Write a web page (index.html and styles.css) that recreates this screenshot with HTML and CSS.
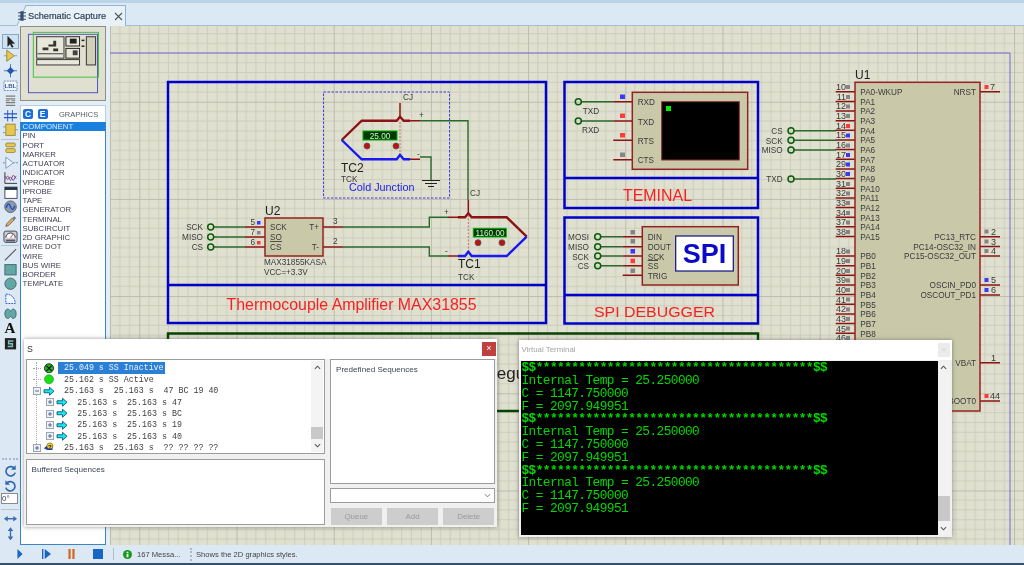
FILE: index.html
```html
<!DOCTYPE html>
<html lang="en">
<head>
<meta charset="utf-8">
<title>Schematic Capture</title>
<link rel="stylesheet" href="styles.css">
</head>
<body>
<svg class="defs" width="0" height="0">
  <symbol id="plus" viewBox="0 0 8 8"><rect x=".5" y=".5" width="7" height="7" fill="#eef2f6" stroke="#9aa6b2"/><path d="M2 4h4M4 2v4" stroke="#5a6a90"/></symbol>
  <symbol id="minus" viewBox="0 0 8 8"><rect x=".5" y=".5" width="7" height="7" fill="#eef2f6" stroke="#9aa6b2"/><path d="M2 4h4" stroke="#5a6a90"/></symbol>
  <symbol id="arrow" viewBox="0 0 12 10"><path d="M1 3.5h5.5V1L11 5 6.500 9V6.500H1z" fill="#19e6f0" stroke="#0a5a78" stroke-width=".9"/></symbol>
</svg>
<div class="app">
  <header class="tabs">
    <div class="tab">
      <svg class="tab-ico" viewBox="0 0 10 14"><path d="M3 1h4v12H3z" fill="#3a5068"/><path d="M0 3h10M0 7h10M0 11h10" stroke="#3a5068" stroke-width="1.400"/></svg>
      <span class="tab-text">Schematic Capture</span>
      <svg class="tab-x" viewBox="0 0 9 9"><path d="M1 1l7 7M8 1L1 8" stroke="#4c565f" stroke-width="1.100"/></svg>
    </div>
  </header>
  <main class="main">
    <nav class="tools">
      <div class="tool sel"><svg viewBox="0 0 16 14"><path d="M5 1v11l2.500-2.500L9.500 13l1.500-.8-2-3.400h3.500z" fill="#222" stroke="#222" stroke-width=".4"/></svg></div>
      <div class="tool"><svg viewBox="0 0 16 14"><path d="M1 7h3M12 7h3" stroke="#8a98b0"/><path d="M4 1l8 6-8 6z" fill="#e6c84e" stroke="#9c8a40"/></svg></div>
      <div class="tool"><svg viewBox="0 0 16 14"><path d="M1 7h14M8 0v14" stroke="#4c6ea8"/><path d="M8 3l4 4-4 4-4-4z" fill="#2456b0"/></svg></div>
      <div class="tool"><svg viewBox="0 0 16 14"><rect x="1" y="2" width="14" height="10" fill="#f2f6fa" stroke="#6a88b0" stroke-dasharray="2 1"/><text class="lbl" x="8" y="9.500">LBL</text></svg></div>
      <div class="tool"><svg viewBox="0 0 16 14"><path d="M3 2h10M3 5h10M3 7h4M9 7h4M3 9h10M3 12h10" stroke="#7d7d74" stroke-width="1.300"/></svg></div>
      <div class="tool"><svg viewBox="0 0 16 14"><path d="M1 5h14M1 9h14" stroke="#2456c0" stroke-width="1.500"/><path d="M5 1v12M10 1v12" stroke="#2456c0"/></svg></div>
      <div class="tool"><svg viewBox="0 0 16 14"><path d="M0 4h3M0 10h3M13 7h3" stroke="#8a98b0"/><rect x="3" y="1" width="10" height="12" fill="#e6c84e" stroke="#9c8a40"/></svg></div>
      <div class="tool-sep"></div>
      <div class="tool"><svg viewBox="0 0 16 14"><rect x="3" y="2" width="10" height="4" rx="1" fill="#e6c84e" stroke="#9c8a40"/><rect x="3" y="8" width="10" height="4" rx="1" fill="#e6c84e" stroke="#9c8a40"/></svg></div>
      <div class="tool"><svg viewBox="0 0 16 14"><path d="M0 7h3M11 7h5" stroke="#6a88b0" stroke-dasharray="2 1"/><path d="M3 1l8 6-8 6z" fill="#eef4fa" stroke="#7a9ab8"/></svg></div>
      <div class="tool"><svg viewBox="0 0 16 14"><path d="M2 1v12h13" stroke="#333" fill="none"/><path d="M2 9l3-4 3 5 3-6 3 4" stroke="#e04040" fill="none"/><path d="M2 5l3 4 3-3 3 4 3-5" stroke="#3060d0" fill="none"/></svg></div>
      <div class="tool"><svg viewBox="0 0 16 14"><rect x="2" y="1" width="13" height="12" fill="#fff" stroke="#445"/><rect x="2" y="1" width="13" height="3" fill="#234"/></svg></div>
      <div class="tool"><svg viewBox="0 0 16 14"><circle cx="8" cy="7" r="6.200" fill="#8f9aa8" stroke="#58626e"/><path d="M3.500 8c1.500-5 3-5 4.500-1s3 4 4.500-1" fill="none" stroke="#1a50c8" stroke-width="1.600"/></svg></div>
      <div class="tool"><svg viewBox="0 0 16 14"><path d="M3 12l1-3 6-6 2 2-6 6z" fill="#d8b070" stroke="#7a6040"/><path d="M10 3l2-2 2 2-2 2" fill="#777"/></svg></div>
      <div class="tool"><svg viewBox="0 0 16 14"><rect x="1" y="1" width="14" height="12" rx="2" fill="#c8d0d8" stroke="#445"/><path d="M3 8a5 5 0 0 1 10 0" fill="#fff" stroke="#333"/><path d="M8 8l3-4" stroke="#e03030"/><rect x="3" y="10" width="10" height="2" fill="#556"/></svg></div>
      <div class="tool-sep"></div>
      <div class="tool"><svg viewBox="0 0 16 14"><path d="M2 13L14 1" stroke="#555" stroke-width="1.200"/></svg></div>
      <div class="tool"><svg viewBox="0 0 16 14"><rect x="2" y="1.500" width="12" height="11" fill="#62a6a6" stroke="#3f6a6a"/></svg></div>
      <div class="tool"><svg viewBox="0 0 16 14"><circle cx="8" cy="7" r="6" fill="#62a6a6" stroke="#3f6a6a"/></svg></div>
      <div class="tool"><svg viewBox="0 0 16 14"><path d="M3 2c6 0 10 4 10 10H3z" fill="#eef4fa" stroke="#2050c8" stroke-dasharray="2 1"/></svg></div>
      <div class="tool"><svg viewBox="0 0 16 14"><path d="M5 2c2 0 2 2 3 2s1-2 3-2c4 0 4 10 0 10-2 0-2-2-3-2s-1 2-3 2C1 12 1 2 5 2z" fill="#62a6a6" stroke="#3f6a6a"/></svg></div>
      <div class="tool tool-a">A</div>
      <div class="tool"><svg viewBox="0 0 16 14"><rect x="2" y="1" width="12" height="12" fill="#222"/><path d="M11 4H6v3h4v3H5" fill="none" stroke="#7fc0c0" stroke-width="1.500"/></svg></div>
      <div class="tool-fill"></div>
      <div class="tool-grip"></div>
      <div class="tool"><svg viewBox="0 0 16 14"><path d="M12.500 5A5 5 0 1 0 13 9" fill="none" stroke="#2f66b0" stroke-width="1.800"/><path d="M13.500 1v5h-5z" fill="#2f66b0"/></svg></div>
      <div class="tool"><svg viewBox="0 0 16 14"><path d="M3.500 5A5 5 0 1 1 3 9" fill="none" stroke="#2f66b0" stroke-width="1.800"/><path d="M2.500 1v5h5z" fill="#2f66b0"/></svg></div>
      <div class="angle">0°</div>
      <div class="tool-sep"></div>
      <div class="tool"><svg viewBox="0 0 16 14"><path d="M4 7h8" stroke="#3a6cb0" stroke-width="1.500"/><path d="M5 4L1 7l4 3zM11 4l4 3-4 3z" fill="#3a6cb0"/></svg></div>
      <div class="tool"><svg viewBox="0 0 16 14"><path d="M8 3v8" stroke="#3a6cb0" stroke-width="1.500"/><path d="M5 4l3-4 3 4zM5 10l3 4 3-4z" fill="#3a6cb0"/></svg></div>
    </nav>
    <aside class="side">
      <div class="overview">
        <svg viewBox="0 0 86 75">
          <rect x="7.500" y="7.500" width="71" height="60" fill="none" stroke="#5050c0"/>
          <rect x="16" y="10" width="28" height="22" fill="#e8e8da" stroke="#333"/>
          <rect x="16" y="33.500" width="44" height="5.500" fill="#e8e8da" stroke="#333"/>
          <path d="M17 27.500h26" stroke="#333"/>
          <path d="M22 21h6v3h-6zM28 18h6v2h-6zM33 14h3v6h-3zM33 22h5v3h-5z" fill="#333"/>
          <rect x="46" y="10" width="14" height="9.500" fill="#e8e8da" stroke="#222"/>
          <rect x="50" y="12" width="7" height="5" fill="#222"/>
          <rect x="46" y="22" width="14" height="10" fill="#e8e8da" stroke="#222"/>
          <rect x="53" y="24" width="5" height="5" fill="#444"/>
          <rect x="67" y="10" width="9.500" height="29" fill="#d0d0b8" stroke="#333"/>
          <rect x="62" y="13" width="3" height="1.500" fill="#222"/><rect x="62" y="19" width="3" height="1.500" fill="#222"/>
          <rect x="12.500" y="5.500" width="67" height="46" fill="none" stroke="#40c040"/>
        </svg>
      </div>
      <div class="mode">
        <span class="mode-btn">C</span><span class="mode-btn">E</span><span class="mode-title">GRAPHICS</span>
      </div>
      <ul class="list">
        <li class="cur">COMPONENT</li><li>PIN</li><li>PORT</li><li>MARKER</li><li>ACTUATOR</li><li>INDICATOR</li><li>VPROBE</li><li>IPROBE</li><li>TAPE</li><li>GENERATOR</li><li>TERMINAL</li><li>SUBCIRCUIT</li><li>2D GRAPHIC</li><li>WIRE DOT</li><li>WIRE</li><li>BUS WIRE</li><li>BORDER</li><li>TEMPLATE</li>
      </ul>
    </aside>
    <section class="canvas">
      <svg class="sheet" viewBox="110 26 914 519" width="914" height="519">
        <defs>
          <pattern id="grid" patternUnits="userSpaceOnUse" x="139.300" y="101.700" width="97.200" height="97.200">
            <path class="gminor" d="M9.720 0V97.200M19.440 0V97.200M29.160 0V97.200M38.880 0V97.200M48.600 0V97.200M58.320 0V97.200M68.040 0V97.200M77.760 0V97.200M87.480 0V97.200M0 9.720H97.200M0 19.440H97.200M0 29.160H97.200M0 38.880H97.200M0 48.600H97.200M0 58.320H97.200M0 68.040H97.200M0 77.760H97.200M0 87.480H97.200"/>
            <path class="gmajor" d="M.5 0V97.200M0 .5H97.200"/>
          </pattern>
        </defs>
        <rect x="110" y="26" width="914" height="519" fill="url(#grid)"/>
        <path class="edge" d="M110 53H1010V545"/>

        <!-- frames -->
        <rect class="frame" x="168" y="82" width="378" height="241"/><path class="frame" d="M168 285H546"/>
        <rect class="frame" x="564.500" y="82" width="193.500" height="126"/><path class="frame" d="M564.500 178H758"/>
        <rect class="frame" x="564.500" y="217.500" width="193.500" height="106"/><path class="frame" d="M564.500 295H758"/>
        <rect class="frame-g" x="168" y="333.500" width="590" height="77.500"/>
        <text class="cap big" x="484.500" y="379">Regulator</text>

        <text class="cap red" x="226.500" y="310" textLength="250" lengthAdjust="spacingAndGlyphs">Thermocouple Amplifier MAX31855</text>
        <text class="cap red" x="623" y="201" textLength="69" lengthAdjust="spacingAndGlyphs">TEMINAL</text>
        <text class="cap red2" x="594" y="317" textLength="121" lengthAdjust="spacingAndGlyphs">SPI DEBUGGER</text>

        <!-- cold junction group -->
        <rect class="dash" x="323.500" y="92" width="126" height="106"/>
        <path class="tc-r" d="M341.700 140L361.700 120.700H396.700L400 116.700L403.700 120.700H410"/>
        <path class="tc-b" d="M341.700 140L361.700 159.300H396.700L400 155L403.700 159.300H410"/>
        <path class="pin" d="M400 103V116.700M410 120.700H420M410 159.300H420"/>
        <path class="pink" d="M400 122V154"/>
        <path class="wire" d="M420 120.700H468V200M420 157H431V180"/>
        <path class="gnd" d="M422 180.500H440M425 183.500H437M428 186.500H434"/>
        <text class="t8" x="403" y="100">CJ</text>
        <text class="t8" x="419" y="118">+</text>
        <text class="t8" x="417" y="157">-</text>
        <rect class="lcd" x="363" y="131" width="34" height="9"/>
        <text class="lcd-t" x="380" y="139">25.00</text>
        <circle class="dot" cx="367" cy="146" r="3"/><circle class="dot" cx="396" cy="146" r="3"/>
        <text class="ref" x="341" y="172">TC2</text>
        <text class="t8" x="341" y="181.500">TCK</text>
        <text class="cold" x="349" y="191">Cold Junction</text>

        <!-- U2 -->
        <path class="wire" d="M213.700 227H245M213.700 237H245M213.700 247H245"/>
        <path class="pin" d="M245 227H265M245 237H265M245 247H265M323 227H343M323 247H343"/>
        <rect class="body" x="265" y="218" width="58" height="38"/>
        <g class="term"><circle cx="210.700" cy="227" r="3"/><circle cx="210.700" cy="237" r="3"/><circle cx="210.700" cy="247" r="3"/></g>
        <text class="t8 e" x="203" y="230">SCK</text><text class="t8 e" x="203" y="240">MISO</text><text class="t8 e" x="203" y="250">CS</text>
        <text class="ref" x="265" y="215">U2</text>
        <text class="t8" x="250.500" y="225">5</text><text class="t8" x="250.500" y="235">7</text><text class="t8" x="250.500" y="245">6</text>
        <rect class="sb" x="257" y="221" width="3.500" height="3.500"/><rect class="sg" x="257" y="231" width="3.500" height="3.500"/><rect class="sr" x="257" y="241" width="3.500" height="3.500"/>
        <text class="t8" x="270" y="230">SCK</text><text class="t8" x="270" y="240">SO</text><text class="t8" x="270" y="250">CS</text>
        <path class="over" d="M270 241.500H282"/>
        <text class="t8 e" x="319" y="230">T+</text><text class="t8 e" x="319" y="250">T-</text>
        <text class="t8" x="333" y="224">3</text><text class="t8" x="333" y="244">2</text>
        <text class="t8" x="264" y="265">MAX31855KASA</text><text class="t8" x="264" y="275">VCC=+3.3V</text>
        <path class="wire" d="M343 227H429.300V217.300H448M343 247H429.300V256H448"/>

        <!-- TC1 -->
        <path class="pin" d="M448 217.300H458M448 256H458M468.300 200V213"/>
        <path class="tc-r" d="M458 217.300H465L468.300 213.300L471.700 217.300H506.700L526.700 236.700"/>
        <path class="tc-b" d="M458 256H465L468.300 251.700L471.700 256H506.700L526.700 236.700"/>
        <path class="pink" d="M468.300 215V250"/>
        <text class="t8" x="444" y="215">+</text><text class="t8" x="445" y="254">-</text>
        <text class="t8" x="470" y="196">CJ</text>
        <rect class="lcd" x="473.300" y="228.300" width="33" height="8.700"/>
        <text class="lcd-t" x="490" y="236">1160.00</text>
        <circle class="dot" cx="478" cy="242.700" r="3"/><circle class="dot" cx="502" cy="242.700" r="3"/>
        <text class="ref" x="458" y="268">TC1</text>
        <text class="t8" x="458" y="280">TCK</text>

        <!-- Terminal -->
        <path class="wire" d="M581 101.700H613.300M581 121H613.300"/>
        <g class="term"><circle cx="578.300" cy="101.700" r="3"/><circle cx="578.300" cy="121" r="3"/></g>
        <path class="pin" d="M613.300 101.700H632.300M613.300 121H632.300M613.300 140.300H632.300M613.300 159.700H632.300"/>
        <rect class="body" x="632.300" y="92.300" width="115.400" height="77"/>
        <rect class="scr" x="661.700" y="101.700" width="77.600" height="58.300"/>
        <rect class="led" x="666" y="106" width="5" height="5"/>
        <rect class="sb" x="620" y="94.500" width="5" height="4.500"/><rect class="sr" x="620" y="113.500" width="5" height="4.500"/><rect class="sr" x="620" y="133" width="5" height="4.500"/><rect class="sg" x="620" y="152.500" width="5" height="4.500"/>
        <text class="t8" x="582.700" y="114">TXD</text><text class="t8" x="582" y="133">RXD</text>
        <text class="t8" x="637.700" y="105">RXD</text><text class="t8" x="637.700" y="124.500">TXD</text><text class="t8" x="637.700" y="143.500">RTS</text><text class="t8" x="637.700" y="163">CTS</text>

        <!-- SPI -->
        <path class="wire" d="M600.500 236.700H622.700M600.500 246.700H622.700M600.500 256H622.700M600.500 265.700H622.700"/>
        <g class="term"><circle cx="597.700" cy="236.700" r="3"/><circle cx="597.700" cy="246.700" r="3"/><circle cx="597.700" cy="256" r="3"/><circle cx="597.700" cy="265.700" r="3"/></g>
        <path class="pin" d="M622.700 236.700H642.300M622.700 246.700H642.300M622.700 256H642.300M622.700 265.700H642.300M622.700 275.300H642.300"/>
        <rect class="body" x="642.300" y="226.700" width="96" height="58.300"/>
        <rect class="spi-box" x="675.700" y="236" width="57.600" height="35"/>
        <text class="spi" x="704.500" y="263">SPI</text>
        <rect class="sg" x="630.500" y="230" width="4.500" height="4.500"/><rect class="sg" x="630.500" y="239" width="4.500" height="4.500"/><rect class="sb" x="630.500" y="249" width="4.500" height="4.500"/><rect class="sr" x="630.500" y="258.700" width="4.500" height="4.500"/><rect class="sg" x="630.500" y="268.500" width="4.500" height="4.500"/>
        <text class="t8 e" x="589" y="240">MOSI</text><text class="t8 e" x="589" y="250">MISO</text><text class="t8 e" x="589" y="259.500">SCK</text><text class="t8 e" x="589" y="269">CS</text>
        <text class="t8" x="647.700" y="240">DIN</text><text class="t8" x="647.700" y="250">DOUT</text><text class="t8" x="647.700" y="259.500">SCK</text><text class="t8" x="647.700" y="269">SS</text><text class="t8" x="647.700" y="279">TRIG</text>
        <path class="over" d="M647.700 260.500H658"/>

        <!-- connectors to U1 -->
        <path class="wire" d="M794 130.700H836M794 140.300H836M794 150H836M794 179H836"/>
        <g class="term"><circle cx="791" cy="130.700" r="3"/><circle cx="791" cy="140.300" r="3"/><circle cx="791" cy="150" r="3"/><circle cx="791" cy="179" r="3"/></g>
        <text class="t8 e" x="782.700" y="134">CS</text><text class="t8 e" x="782.700" y="143.500">SCK</text><text class="t8 e" x="782.700" y="153">MISO</text><text class="t8 e" x="782.700" y="182">TXD</text>

        <!-- U1 -->
        <path class="pin" d="M835.700 91.700H855M835.700 101.400H855M835.700 111H855M835.700 120.700H855M835.700 130.300H855M835.700 140H855M835.700 149.600H855M835.700 159.300H855M835.700 168.900H855M835.700 178.600H855M835.700 188.200H855M835.700 197.900H855M835.700 207.500H855M835.700 217.200H855M835.700 226.800H855M835.700 236.500H855M835.700 256H855M835.700 265.700H855M835.700 275.300H855M835.700 285H855M835.700 294.600H855M835.700 304.300H855M835.700 313.900H855M835.700 323.600H855M835.700 333.200H855M835.700 342.900H855M980 91.700H1000M980 236.700H1000M980 246.400H1000M980 256H1000M980 285H1000M980 295H1000M980 362.700H1000M980 401H1000"/>
        <rect class="body" x="855" y="82.300" width="125" height="328.700"/>
        <text class="ref" x="855" y="79">U1</text>
        <path class="sg" d="M846 85h4v4h-4zM846 95h4v4h-4zM846 104.500h4v4h-4zM846 114h4v4h-4zM846 143.500h4v4h-4zM846 182h4v4h-4zM846 191.500h4v4h-4zM846 201h4v4h-4zM846 211h4v4h-4zM846 220.500h4v4h-4zM846 230h4v4h-4zM846 249.500h4v4h-4zM846 259h4v4h-4zM846 269h4v4h-4zM846 278.500h4v4h-4zM846 288h4v4h-4zM846 297.500h4v4h-4zM846 307.500h4v4h-4zM846 317h4v4h-4zM846 326.500h4v4h-4zM846 336h4v4h-4zM984.500 229.500h4v4h-4zM984.500 239.500h4v4h-4zM984.500 249h4v4h-4z"/>
        <path class="sr" d="M846 124h4v4h-4zM984.500 85h4v4h-4zM984.500 394h4v4h-4z"/>
        <path class="sb" d="M846 133.500h4v4h-4zM846 153h4v4h-4zM846 162.500h4v4h-4zM846 172h4v4h-4zM984.500 278h4v4h-4zM984.500 288h4v4h-4z"/>
        <g class="n9 e">
          <text x="846" y="90">10</text><text x="846" y="99.700">11</text><text x="846" y="109.300">12</text><text x="846" y="119">13</text><text x="846" y="128.600">14</text><text x="846" y="138.300">15</text><text x="846" y="147.900">16</text><text x="846" y="157.600">17</text><text x="846" y="167.200">29</text><text x="846" y="176.900">30</text><text x="846" y="186.500">31</text><text x="846" y="196.200">32</text><text x="846" y="205.800">33</text><text x="846" y="215.500">34</text><text x="846" y="225.100">37</text><text x="846" y="234.800">38</text>
          <text x="846" y="254.300">18</text><text x="846" y="264">19</text><text x="846" y="273.600">20</text><text x="846" y="283.300">39</text><text x="846" y="292.900">40</text><text x="846" y="302.600">41</text><text x="846" y="312.200">42</text><text x="846" y="321.900">43</text><text x="846" y="331.500">45</text><text x="846" y="341.200">46</text>
        </g>
        <g class="n9">
          <text x="990" y="90">7</text><text x="991" y="235">2</text><text x="991" y="244.700">3</text><text x="991" y="254.300">4</text><text x="991" y="283.300">5</text><text x="991" y="293.300">6</text><text x="991" y="361">1</text><text x="990" y="399.300">44</text>
        </g>
        <g class="t8">
          <text x="860.300" y="95">PA0-WKUP</text><text x="860.300" y="104.700">PA1</text><text x="860.300" y="114.300">PA2</text><text x="860.300" y="124">PA3</text><text x="860.300" y="133.600">PA4</text><text x="860.300" y="143.300">PA5</text><text x="860.300" y="152.900">PA6</text><text x="860.300" y="162.600">PA7</text><text x="860.300" y="172.200">PA8</text><text x="860.300" y="181.900">PA9</text><text x="860.300" y="191.500">PA10</text><text x="860.300" y="201.200">PA11</text><text x="860.300" y="210.800">PA12</text><text x="860.300" y="220.500">PA13</text><text x="860.300" y="230.100">PA14</text><text x="860.300" y="239.800">PA15</text>
          <text x="860.300" y="259.300">PB0</text><text x="860.300" y="269">PB1</text><text x="860.300" y="278.600">PB2</text><text x="860.300" y="288.300">PB3</text><text x="860.300" y="297.900">PB4</text><text x="860.300" y="307.600">PB5</text><text x="860.300" y="317.200">PB6</text><text x="860.300" y="326.900">PB7</text><text x="860.300" y="336.500">PB8</text>
        </g>
        <g class="t8 e">
          <text x="976" y="95">NRST</text><text x="976" y="240">PC13_RTC</text><text x="976" y="250">PC14-OSC32_IN</text><text x="976" y="259">PC15-OSC32_OUT</text><text x="976" y="288">OSCIN_PD0</text><text x="976" y="298">OSCOUT_PD1</text><text x="976" y="366">VBAT</text><text x="976" y="404">BOOT0</text>
        </g>
      </svg>
    </section>
  </main>
  <footer class="status">
    <svg class="st-ico play" viewBox="0 0 7 12" preserveAspectRatio="none"><path d="M.5 0l6 6-6 6z" fill="#1766c2"/></svg>
    <svg class="st-ico step" viewBox="0 0 10 12" preserveAspectRatio="none"><path d="M0 0h1.500v12H0z" fill="#1766c2"/><path d="M3 0l7 6-7 6z" fill="#1766c2"/></svg>
    <svg class="st-ico pause" viewBox="0 0 8 12" preserveAspectRatio="none"><path d="M.5 0h2.500v12H.5zM5 0h2.500v12H5z" fill="#d8641e"/></svg>
    <svg class="st-ico stop" viewBox="0 0 10 10"><rect width="10" height="10" fill="#1766c2"/></svg>
    <span class="st-sep"></span>
    <svg class="st-info" viewBox="0 0 10 10"><circle cx="5" cy="5" r="5" fill="#159a1e"/><path d="M4 2h2v1.500H4zM4 4.500h2V8H4z" fill="#fff"/></svg>
    <span class="st-msg">167 Messa...</span>
    <span class="st-grip"></span>
    <span class="st-hint">Shows the 2D graphics styles.</span>
  </footer>

  <section class="win debug">
    <div class="win-title"><span>S</span><span class="close-red">×</span></div>
    <div class="debug-body">
      <div class="debug-left">
        <div class="tree">
          <div class="tree-rows">
            <div class="row"><i class="slot stub"></i><svg class="ic" viewBox="0 0 12 12"><circle cx="6" cy="6" r="5.200" fill="#18c018" stroke="#222"/><path d="M3 3l6 6M9 3l-6 6" stroke="#111" stroke-width="1.600"/></svg><span class="sel-row">25.049 s SS Inactive</span></div>
            <div class="row"><i class="slot stub"></i><svg class="ic" viewBox="0 0 12 12"><circle cx="6" cy="6" r="5.200" fill="#18e018" stroke="#1a8a1a" stroke-width=".6"/></svg><span class="val">25.162 s SS Active</span></div>
            <div class="row"><svg class="slot"><use href="#minus"/></svg><svg class="ic"><use href="#arrow"/></svg><span class="val">25.163 s  25.163 s  47 BC 19 40</span></div>
            <div class="row sub"><svg class="slot"><use href="#plus"/></svg><svg class="ic"><use href="#arrow"/></svg><span class="val">25.163 s  25.163 s 47</span></div>
            <div class="row sub"><svg class="slot"><use href="#plus"/></svg><svg class="ic"><use href="#arrow"/></svg><span class="val">25.163 s  25.163 s BC</span></div>
            <div class="row sub"><svg class="slot"><use href="#plus"/></svg><svg class="ic"><use href="#arrow"/></svg><span class="val">25.163 s  25.163 s 19</span></div>
            <div class="row sub"><svg class="slot"><use href="#plus"/></svg><svg class="ic"><use href="#arrow"/></svg><span class="val">25.163 s  25.163 s 40</span></div>
            <div class="row"><svg class="slot"><use href="#plus"/></svg><svg class="ic" viewBox="0 0 12 12"><path d="M0 7l4-3h6v5H4z" fill="#1a3cc0"/><circle cx="7" cy="4.500" r="3.500" fill="#f0d020" stroke="#222" stroke-width=".5"/><text class="q" x="7" y="7.500">?</text></svg><span class="val">25.163 s  25.163 s  ?? ?? ?? ??</span></div>
          </div>
          <div class="vscroll">
            <svg class="chev" viewBox="0 0 8 5"><path d="M1 4l3-3 3 3" fill="none" stroke="#555" stroke-width="1.200"/></svg>
            <div class="track"><div class="thumb tree-thumb"></div></div>
            <svg class="chev" viewBox="0 0 8 5"><path d="M1 1l3 3 3-3" fill="none" stroke="#555" stroke-width="1.200"/></svg>
          </div>
        </div>
        <div class="box buffered">Buffered Sequences</div>
      </div>
      <div class="debug-right">
        <div class="box predefined">Predefined Sequences</div>
        <div class="combo"><svg class="combo-chev" viewBox="0 0 8 5"><path d="M1 1l3 3 3-3" fill="none" stroke="#777" stroke-width="1.100"/></svg></div>
        <div class="btns"><span class="btn">Queue</span><span class="btn">Add</span><span class="btn">Delete</span></div>
      </div>
    </div>
  </section>

  <section class="win vterm">
    <div class="win-title vt-title"><span>Virtual Terminal</span><span class="close-off">×</span></div>
    <div class="vt-body">
      <div class="vt-screen">
        <pre class="vt-text"><b>$$***************************************$$</b>
Internal Temp = 25.250000
C = 1147.750000
F = 2097.949951
<b>$$***************************************$$</b>
Internal Temp = 25.250000
C = 1147.750000
F = 2097.949951
<b>$$***************************************$$</b>
Internal Temp = 25.250000
C = 1147.750000
F = 2097.949951</pre>
      </div>
      <div class="vscroll vt-scroll">
        <svg class="chev" viewBox="0 0 8 5"><path d="M1 4l3-3 3 3" fill="none" stroke="#555" stroke-width="1.200"/></svg>
        <div class="track"><div class="thumb vt-thumb"></div></div>
        <svg class="chev" viewBox="0 0 8 5"><path d="M1 1l3 3 3-3" fill="none" stroke="#555" stroke-width="1.200"/></svg>
      </div>
    </div>
  </section>
</div>
</body>
</html>
```
FILE: styles.css
```css
* { box-sizing: border-box; }
html, body { margin: 0; padding: 0; }
body { font-family: "Liberation Sans", Arial, sans-serif; background: #dfe9f2; overflow: hidden; }
.defs { position: absolute; }
.app { position: relative; width: 1024px; height: 565px; display: flex; flex-direction: column; overflow: hidden; background: #e4eef6; filter: blur(.35px); }

/* tab strip */
.tabs { height: 26px; flex: none; background: #dbe9f4; border-top: 3px solid #b9d4e8; border-bottom: 1px solid #9fc0d8; padding: 2px 0 0 26px; }
.tab { position: relative; width: 100px; height: 21px; background: #e8f1f8; border-top: 1px solid #8eb6d2; border-right: 1px solid #8eb6d2; display: flex; align-items: center; gap: 3px; }
.tab::before { content: ""; position: absolute; left: -5px; top: -1px; bottom: 0; width: 10px; background: #e8f1f8; border-left: 1px solid #8eb6d2; border-top: 1px solid #8eb6d2; transform: skewX(-24deg); z-index: 0; }
.tab-ico { position: relative; width: 8px; height: 12px; flex: none; margin-left: -8px; margin-right: -1px; }
.tab-text { position: relative; font-size: 9.200px; color: #2f4458; -webkit-text-stroke: .2px #2f4458; white-space: nowrap; }
.tab-x { width: 9px; height: 9px; flex: none; margin-left: 5px; }

/* main row */
.main { flex: 1; display: flex; min-height: 0; }
.tools { width: 20px; flex: none; display: flex; flex-direction: column; padding: 8px 0 4px; background: #dce9f4; }
.tool { height: 14.800px; flex: none; display: flex; align-items: center; justify-content: center; }
.tool svg { width: 15px; height: 13.500px; }
.tool.sel { background: #cfe2f4; border: 1px solid #86a8c8; margin: 0 1px 0 2px; }
.tool-sep { height: 1px; margin: 1px 1px; flex: none; background: #b4c4d2; }
.tool-a { font: 700 15px "Liberation Serif", serif; color: #111; }
.tool-fill { flex: 1; }
.tool-grip { height: 2px; margin: 0 2px 4px; border-top: 2px dotted #a8bacb; }
.angle { height: 11px; margin: 0 2px 4px 1px; background: #fff; border: 1px solid #8a8a8a; font-size: 8px; line-height: 9px; color: #444; flex: none; }
.lbl { font: 700 6.500px "Liberation Sans", sans-serif; fill: #2b5a9c; text-anchor: middle; }

.side { width: 90px; flex: none; padding-right: 4.300px; display: flex; flex-direction: column; }
.overview { height: 75px; background: #e0e0d0; border: 1px solid #8e8e86; flex: none; }
.overview svg { display: block; width: 84px; height: 73px; }
.mode { height: 17px; margin-top: 4px; background: #fff; border: 1px solid #b8cfe2; border-bottom: 0; display: flex; align-items: center; padding-left: 2px; flex: none; }
.mode-btn { width: 10px; height: 10px; margin-right: 4.500px; background: #1870d8; color: #fff; border-radius: 2px; font-size: 8.500px; font-weight: 700; text-align: center; line-height: 10px; }
.mode-title { margin-left: 7px; font-size: 7.500px; color: #565c64; }
.list { flex: 1; margin: 0; padding: 0; list-style: none; background: #fff; border: 1.500px solid #3a86c0; border-top: 0; font-size: 7.800px; color: #3d3d52; }
.list li { height: 9.250px; line-height: 9.250px; padding-left: 1.500px; white-space: nowrap; }
.list .cur { background: #1a80e0; color: #dcecfa; }

.canvas { flex: 1; position: relative; border-left: 1px solid #a8a89c; background: #e0e0d0; min-width: 0; }
.sheet { display: block; margin-left: -1px; }
.gminor { stroke: #cdcdbc; stroke-width: 1; fill: none; }
.gmajor { stroke: #bcbcac; stroke-width: 1; fill: none; }
.edge { fill: none; stroke: #6a6ace; stroke-width: 1; }
.frame { fill: none; stroke: #0000cc; stroke-width: 2.500; }
.frame-g { fill: none; stroke: #064406; stroke-width: 2.500; }
.dash { fill: none; stroke: #4040f0; stroke-width: 1; stroke-dasharray: 2.500 1.500; }
.cap { font-family: "Liberation Sans", sans-serif; }
.red { font-size: 16px; fill: #fa2020; }
.red2 { font-size: 15.500px; fill: #fa2020; }
.big { font-size: 17px; fill: #222; }
.wire { fill: none; stroke: #2a6a2a; stroke-width: 1.400; }
.pin { fill: none; stroke: #8e1414; stroke-width: 1.500; }
.pink { fill: none; stroke: #c05050; stroke-width: .8; stroke-dasharray: 2 1.500; }
.tc-r { fill: none; stroke: #8c1414; stroke-width: 2.400; }
.tc-b { fill: none; stroke: #1a1af0; stroke-width: 2.400; }
.gnd { fill: none; stroke: #222; stroke-width: 1; }
.body { fill: #c9c9aa; stroke: #952222; stroke-width: 1.500; }
.scr { fill: #000; stroke: #8e3030; stroke-width: 1; }
.led { fill: #00f000; }
.term { fill: none; stroke: #0c5c0c; stroke-width: 1.500; }
.sg { fill: #858585; }
.sr { fill: #ff3a3a; }
.sb { fill: #3a3aff; }
.over { stroke: #333; stroke-width: .8; fill: none; }
.lcd { fill: #003a00; stroke: #00b000; stroke-width: 1; }
.lcd-t { font: 8.200px "Liberation Sans", sans-serif; fill: #c8f8c8; text-anchor: middle; }
.dot { fill: #c01010; stroke: #555; stroke-width: .8; }
.t8 { font: 8.200px "Liberation Sans", sans-serif; fill: #3a3a3a; }
.n9 { font: 9px "Liberation Sans", sans-serif; fill: #3a3a3a; }
.e { text-anchor: end; }
.ref { font: 12px "Liberation Sans", sans-serif; fill: #222; }
.cold { font: 10.800px "Liberation Sans", sans-serif; fill: #2020f0; }
.spi-box { fill: #fff; stroke: #101080; stroke-width: 1.200; }
.spi { font: 700 27px "Liberation Sans", sans-serif; fill: #0a0ac8; text-anchor: middle; }

/* status bar */
.status { height: 20px; flex: none; display: flex; align-items: center; padding-left: 17px; background: #dce9f4; border-bottom: 2px solid #34506a; font-size: 7.600px; color: #444; }
.st-ico { height: 10px; flex: none; }
.play { width: 6px; margin-right: 19px; }
.step { width: 9px; margin-right: 17px; }
.pause { width: 7px; margin-right: 18px; }
.stop { width: 10px; margin-right: 10px; }
.st-sep { width: 1px; height: 12px; background: #aebecb; margin-right: 9px; flex: none; }
.st-info { width: 9px; height: 9px; margin-right: 5px; flex: none; }
.st-msg { width: 43px; white-space: nowrap; }
.st-grip { width: 2px; height: 13px; border-left: 2px dotted #a8bacb; margin: 0 4px 0 10px; flex: none; }
.st-hint { white-space: nowrap; }

/* floating windows */
.win { position: absolute; background: #f0f0f0; box-shadow: 0 0 4px rgba(60,60,60,.55); display: flex; flex-direction: column; }
.win-title { height: 20px; flex: none; background: #fff; display: flex; align-items: center; justify-content: space-between; font-size: 8.800px; color: #333; padding: 0 1px 0 3px; }
.debug { left: 24px; top: 339px; width: 473px; height: 188px; }
.close-red { width: 14px; height: 13.500px; background: #c0403f; color: #fff; font-size: 9px; line-height: 13px; text-align: center; }
.debug-body { flex: 1; display: flex; gap: 5px; padding: 0 2px 2px 1.500px; min-height: 0; }
.debug-left { width: 299.500px; display: flex; flex-direction: column; gap: 5px; }
.debug-right { flex: 1; display: flex; flex-direction: column; }
.tree { height: 94.500px; flex: none; display: flex; background: #fff; border: 1px solid #9c9c9c; padding: 1px; position: relative; }
.tree::before { content: ""; position: absolute; left: 9.500px; top: 2px; height: 86px; border-left: 1px dotted #a6a6a6; }
.tree-rows { flex: 1; padding-top: 1.500px; font: 8.300px "Liberation Mono", monospace; color: #3e3e3e; }
.row { position: relative; height: 11.350px; display: flex; align-items: center; padding-left: 5.500px; white-space: pre; }
.row.sub { padding-left: 18.800px; }
.slot { width: 8px; height: 8px; flex: none; }
.slot.stub { height: 1px; border-top: 1px dotted #a6a6a6; }
.ic { width: 12px; height: 10.500px; flex: none; margin-left: 2px; }
.val { margin-left: 9px; }
.sel-row { margin-left: 3px; padding: 0 0 0 6px; width: 107px; height: 11.500px; line-height: 11.500px; background: #2b80d6; color: #eaf3fc; }
.q { font: 700 7px "Liberation Sans", sans-serif; fill: #111; text-anchor: middle; }
.vscroll { width: 12px; flex: none; display: flex; flex-direction: column; align-items: center; background: #f4f4f4; }
.chev { width: 7px; height: 5px; flex: none; margin: 4px 0; }
.track { flex: 1; width: 100%; position: relative; display: flex; flex-direction: column; justify-content: flex-end; }
.thumb { background: #c8c8c8; width: 100%; }
.tree-thumb { height: 12px; }
.box { background: #fff; border: 1px solid #9c9c9c; font-size: 8.100px; color: #3a4656; padding: 5px 5px; }
.buffered { height: 66px; }
.predefined { height: 124.500px; flex: none; }
.combo { height: 14.500px; margin-top: 4.500px; background: #fff; border: 1px solid #9c9c9c; display: flex; align-items: center; justify-content: flex-end; padding-right: 3px; flex: none; }
.combo-chev { width: 7px; height: 5px; }
.btns { margin-top: 5px; display: flex; gap: 5.500px; padding: 0 1px; }
.btn { flex: 1; height: 17px; background: #cdcdcd; color: #9a9a9a; font-size: 7.900px; line-height: 17px; text-align: center; }

.vterm { left: 519px; top: 340px; width: 433px; height: 197px; }
.vt-title { height: 19.500px; color: #a4a4a4; font-size: 7.900px; padding: 0 2px 0 2.500px; }
.close-off { width: 12.500px; height: 14px; background: #ebebeb; color: #d0d0d0; text-align: center; line-height: 14px; }
.vt-body { flex: 1; display: flex; padding: 1.500px 2px 2.500px 1.700px; min-height: 0; }
.vt-screen { flex: 1; background: #000; overflow: hidden; padding: 1.200px 0 0 .8px; }
.vt-text { margin: 0; font: 12.800px/12.800px "Liberation Mono", monospace; letter-spacing: -.57px; color: #00d800; }
.vt-scroll { background: #f2f2f2; width: 12.300px; }
.vt-thumb { height: 25px; margin-bottom: 1px; }
```
